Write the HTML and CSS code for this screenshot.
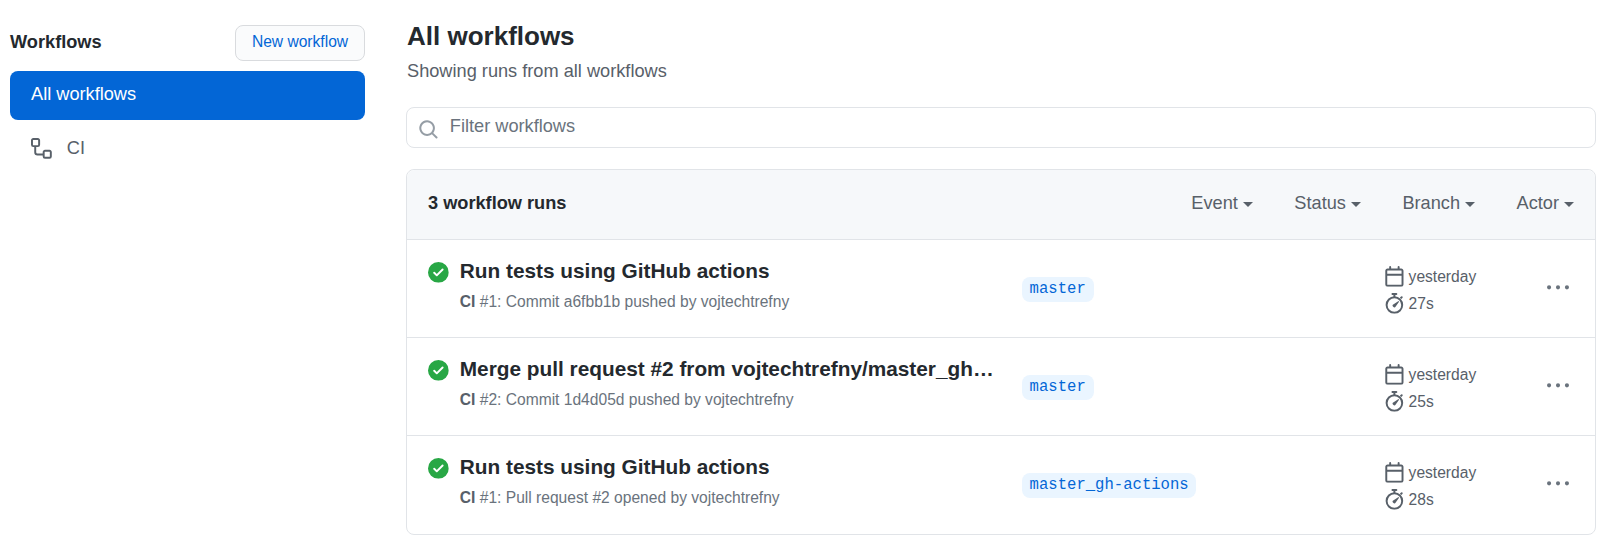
FILE: index.html
```html
<!DOCTYPE html>
<html lang="en">
<head>
    <meta charset="UTF-8">
    <title>Workflows</title>
    <link rel="stylesheet" href="styles.css">
</head>
<body>
    <svg class="sprites" width="0" height="0">
        <symbol id="i-check" viewBox="0 0 16 16"><path fill-rule="evenodd" d="M8 16A8 8 0 108 0a8 8 0 000 16zm3.78-9.72a.75.75 0 00-1.06-1.06L6.75 9.19 5.28 7.72a.75.75 0 00-1.06 1.06l2 2a.75.75 0 001.06 0l4.5-4.5z"/></symbol>
        <symbol id="i-calendar" viewBox="0 0 16 16"><path fill-rule="evenodd" d="M4.75 0a.75.75 0 01.75.75V2h5V.75a.75.75 0 011.5 0V2h1.25c.966 0 1.75.784 1.75 1.75v10.5A1.75 1.75 0 0113.25 16H2.75A1.75 1.75 0 011 14.25V3.75C1 2.784 1.784 2 2.75 2H4V.75A.75.75 0 014.75 0zm-2 3.5a.25.25 0 00-.25.25V6h11V3.75a.25.25 0 00-.25-.25H2.75zM2.5 7.5v6.75c0 .138.112.25.25.25h10.5a.25.25 0 00.25-.25V7.5h-11z"/></symbol>
        <symbol id="i-stopwatch" viewBox="0 0 16 16">
            <path d="M5.75.75A.75.75 0 016.5 0h3a.75.75 0 010 1.5h-.75v1.6h-1.5V1.5H6.5a.75.75 0 01-.75-.75z"/>
            <path d="M12.2 3.6l.9-.9a.75.75 0 111.06 1.06l-.9.9z"/>
            <circle cx="8" cy="9.25" r="6" fill="none" stroke="currentColor" stroke-width="1.5"/>
            <path d="M10.9 6.3a.4.4 0 01.55.55L9 10.3a1.2 1.2 0 11-1.6-1.6z"/>
        </symbol>
        <symbol id="i-kebab" viewBox="0 0 16 16"><path d="M8 9a1.5 1.5 0 100-3 1.5 1.5 0 000 3zM1.5 9a1.5 1.5 0 100-3 1.5 1.5 0 000 3zm13 0a1.5 1.5 0 100-3 1.5 1.5 0 000 3z"/></symbol>
    </svg>

    <div class="layout">
        <aside class="sidebar">
            <div class="sidebar-head">
                <h2>Workflows</h2>
                <a class="btn" href="#">New workflow</a>
            </div>
            <a class="nav-item selected" href="#">All workflows</a>
            <a class="nav-item" href="#">
                <svg class="icon" viewBox="0 0 16 16" fill="currentColor"><path fill-rule="evenodd" d="M0 1.75C0 .784.784 0 1.75 0h3.5C6.216 0 7 .784 7 1.75v3.5A1.75 1.75 0 015.25 7H4v4a1 1 0 001 1h4v-1.25C9 9.784 9.784 9 10.75 9h3.5c.966 0 1.75.784 1.75 1.75v3.5A1.75 1.75 0 0114.25 16h-3.5A1.75 1.75 0 019 14.25v-.75H5A2.5 2.5 0 012.5 11V7h-.75A1.75 1.75 0 010 5.25v-3.5zm1.75-.25a.25.25 0 00-.25.25v3.5c0 .138.112.25.25.25h3.5a.25.25 0 00.25-.25v-3.5a.25.25 0 00-.25-.25h-3.5zm9 9a.25.25 0 00-.25.25v3.5c0 .138.112.25.25.25h3.5a.25.25 0 00.25-.25v-3.5a.25.25 0 00-.25-.25h-3.5z"/></svg>
                CI
            </a>
        </aside>

        <main class="content">
            <h1>All workflows</h1>
            <p class="subtitle">Showing runs from all workflows</p>

            <div class="filter">
                <svg class="search-icon" viewBox="0 0 16 16" fill="currentColor"><path fill-rule="evenodd" d="M11.5 7a4.499 4.499 0 11-8.998 0A4.499 4.499 0 0111.5 7zm-.82 4.74a6 6 0 111.06-1.06l3.04 3.04a.75.75 0 11-1.06 1.06l-3.04-3.04z"/></svg>
                <span>Filter workflows</span>
            </div>

            <div class="runs">
                <div class="runs-head">
                    <strong>3 workflow runs</strong>
                    <div class="filters">
                        <span class="drop">Event</span>
                        <span class="drop">Status</span>
                        <span class="drop">Branch</span>
                        <span class="drop">Actor</span>
                    </div>
                </div>

                <div class="run">
                    <svg class="status"><use href="#i-check"/></svg>
                    <div class="run-info">
                        <div class="run-title">Run tests using GitHub actions</div>
                        <div class="run-meta"><b>CI</b> #1: Commit a6fbb1b pushed by vojtechtrefny</div>
                    </div>
                    <div class="run-branch"><span class="branch">master</span></div>
                    <div class="run-time">
                        <div class="time-line"><svg class="icon"><use href="#i-calendar"/></svg>yesterday</div>
                        <div class="time-line"><svg class="icon"><use href="#i-stopwatch"/></svg>27s</div>
                    </div>
                    <svg class="kebab"><use href="#i-kebab"/></svg>
                </div>

                <div class="run">
                    <svg class="status"><use href="#i-check"/></svg>
                    <div class="run-info">
                        <div class="run-title">Merge pull request #2 from vojtechtrefny/master_gh…</div>
                        <div class="run-meta"><b>CI</b> #2: Commit 1d4d05d pushed by vojtechtrefny</div>
                    </div>
                    <div class="run-branch"><span class="branch">master</span></div>
                    <div class="run-time">
                        <div class="time-line"><svg class="icon"><use href="#i-calendar"/></svg>yesterday</div>
                        <div class="time-line"><svg class="icon"><use href="#i-stopwatch"/></svg>25s</div>
                    </div>
                    <svg class="kebab"><use href="#i-kebab"/></svg>
                </div>

                <div class="run">
                    <svg class="status"><use href="#i-check"/></svg>
                    <div class="run-info">
                        <div class="run-title">Run tests using GitHub actions</div>
                        <div class="run-meta"><b>CI</b> #1: Pull request #2 opened by vojtechtrefny</div>
                    </div>
                    <div class="run-branch"><span class="branch">master_gh-actions</span></div>
                    <div class="run-time">
                        <div class="time-line"><svg class="icon"><use href="#i-calendar"/></svg>yesterday</div>
                        <div class="time-line"><svg class="icon"><use href="#i-stopwatch"/></svg>28s</div>
                    </div>
                    <svg class="kebab"><use href="#i-kebab"/></svg>
                </div>
            </div>
        </main>
    </div>
</body>
</html>
```

FILE: styles.css
```css
body {
    margin: 0;
    font-family: "Liberation Sans", Arial, sans-serif;
    color: #24292e;
    background-color: #fff;
}

a {
    text-decoration: none;
}

.sprites {
    position: absolute;
}

.layout {
    display: flex;
    gap: 41px;
    padding: 25px 16px 0 10px;
}

/* sidebar */
.sidebar {
    width: 355px;
    flex-shrink: 0;
}

.sidebar-head {
    display: flex;
    justify-content: space-between;
    align-items: center;
    height: 36px;
    margin-bottom: 10px;
}

.sidebar-head h2 {
    margin: -2px 0 0;
    font-size: 18.2px;
}

.btn {
    box-sizing: border-box;
    width: 130px;
    height: 36px;
    line-height: 32px;
    text-align: center;
    font-size: 15.6px;
    color: #0366d6;
    background-color: #fafbfc;
    border: 1px solid #d9dbde;
    border-radius: 8px;
}

.nav-item {
    display: flex;
    align-items: center;
    gap: 15px;
    height: 49px;
    padding-left: 21px;
    font-size: 18.2px;
    color: #586069;
    border-radius: 8px;
}

.nav-item.selected {
    box-sizing: border-box;
    padding-bottom: 2px;
    color: #fff;
    background-color: #0366d6;
    margin-bottom: 4px;
}

.icon {
    width: 20.8px;
    height: 20.8px;
    flex-shrink: 0;
    fill: #586069;
    color: #586069;
}

/* main column */
.content {
    width: 1190px;
}

.content h1 {
    margin: -4px 0 0;
    padding-left: 1px;
    font-size: 26px;
    line-height: 30px;
}

.subtitle {
    margin: 9px 0 0;
    padding-left: 1px;
    font-size: 18.2px;
    line-height: 22px;
    color: #586069;
}

.filter {
    box-sizing: border-box;
    display: flex;
    align-items: center;
    gap: 11px;
    height: 41px;
    margin-top: 25px;
    padding: 0 0 2px 11px;
    font-size: 18.2px;
    color: #6a737d;
    background-color: #fff;
    border: 1px solid #e1e4e8;
    border-radius: 8px;
}

.search-icon {
    width: 20.8px;
    height: 20.8px;
    margin-top: 6px;
    color: #959da5;
}

.runs {
    margin-top: 21px;
    border: 1px solid #e1e4e8;
    border-radius: 8px;
}

.runs-head {
    display: flex;
    justify-content: space-between;
    align-items: center;
    box-sizing: border-box;
    height: 69px;
    padding: 0 21px 3px;
    background-color: #f6f8fa;
    border-radius: 8px 8px 0 0;
    font-size: 18.2px;
}

.filters {
    display: flex;
    gap: 41.5px;
    color: #586069;
}

.drop::after {
    content: "";
    display: inline-block;
    margin-left: 5px;
    vertical-align: 2px;
    border-top: 5px solid #586069;
    border-left: 5px solid transparent;
    border-right: 5px solid transparent;
}

.run {
    display: flex;
    align-items: flex-start;
    height: 97px;
    padding-left: 21px;
    border-top: 1px solid #e1e4e8;
}

.run:last-child {
    height: 98px;
}

.status {
    width: 20.8px;
    height: 20.8px;
    margin-top: 22px;
    fill: #28a745;
}

.run-info {
    width: 536px;
    margin-left: 11px;
    padding-top: 18px;
}

.run-title {
    font-size: 20.8px;
    font-weight: bold;
    line-height: 26px;
    white-space: nowrap;
}

.run-meta {
    margin-top: 8px;
    font-size: 15.6px;
    line-height: 20px;
    color: #6a737d;
}

.run-meta b {
    color: #586069;
}

.run-branch {
    width: 362px;
    margin-left: 26px;
    padding-top: 37px;
}

.branch {
    display: inline-block;
    padding: 0 7.8px;
    font-family: "Liberation Mono", monospace;
    font-size: 15.6px;
    line-height: 25px;
    color: #0366d6;
    background-color: #eaf5ff;
    border-radius: 8px;
}

.run-time {
    width: 163px;
    padding-top: 23px;
    font-size: 15.6px;
    color: #586069;
}

.time-line {
    display: flex;
    align-items: center;
    gap: 4px;
    height: 27px;
}

.kebab {
    width: 22px;
    height: 22px;
    margin-top: 37px;
    fill: #6a737d;
}
```
